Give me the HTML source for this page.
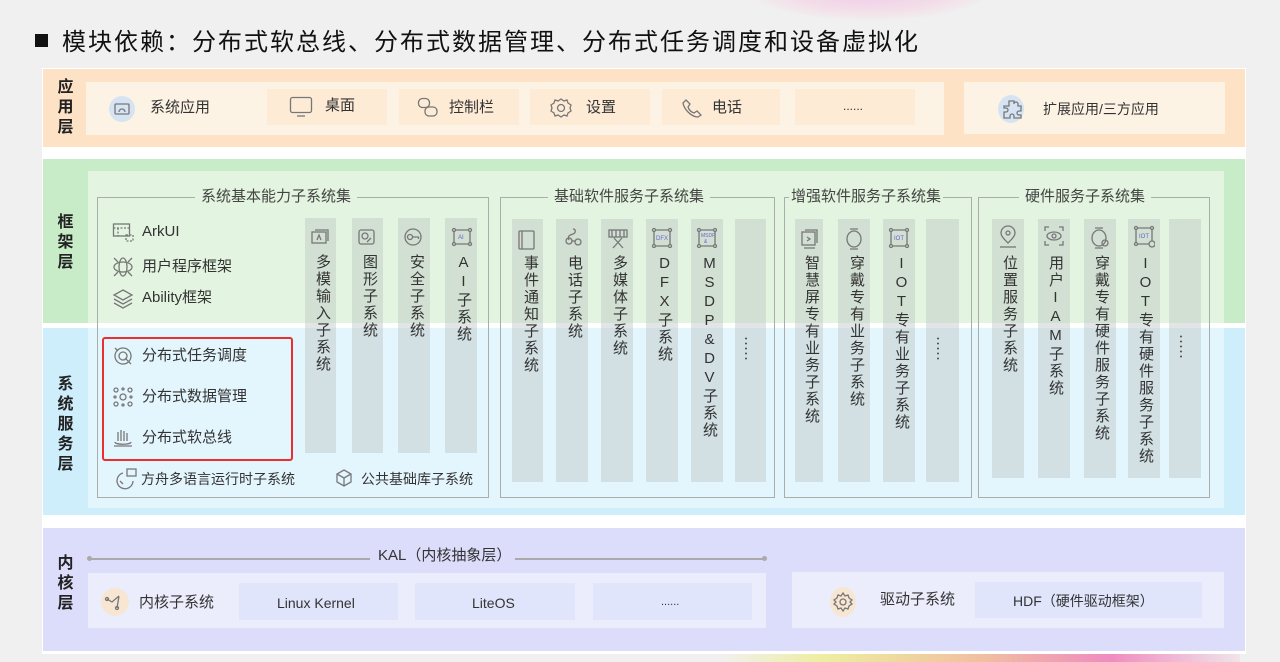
<!DOCTYPE html>
<html><head><meta charset="utf-8"><style>
*{margin:0;padding:0;box-sizing:border-box}
body{width:1280px;height:662px;background:#f0f0f0;position:relative;overflow:hidden;font-family:"Liberation Sans","Noto Sans CJK SC",sans-serif;color:#333}
.a{position:absolute}
.lab{position:absolute;width:43px;text-align:center;font-weight:bold;font-size:16px;line-height:20px;color:#222}
.t{position:absolute;font-size:15px;line-height:18px;white-space:nowrap;color:#333}
.col{position:absolute;background:rgba(185,192,192,0.42)}
.vt{position:absolute;writing-mode:vertical-rl;text-orientation:upright;font-size:15px;letter-spacing:2px;color:#333;white-space:nowrap}
.grp{position:absolute;border:1.5px solid #a9aeab}
.gt{position:absolute;font-size:15px;line-height:18px;color:#444;background:#e3f5e0;padding:0 6px;white-space:nowrap}
.dots{position:absolute;width:2px;height:24px;background:radial-gradient(circle,#555 0.9px,transparent 1.1px) 0 0/2px 5px repeat-y}
svg{position:absolute;fill:none;stroke:#777;stroke-width:1.3}
</style></head><body>
<div class="a" style="left:750px;top:-40px;width:240px;height:60px;border-radius:50%;background:radial-gradient(ellipse,#eec8ec 0%,#f3dfe8 50%,rgba(240,240,240,0) 75%)"></div>
<div class="a" style="left:35px;top:34px;width:13px;height:13px;background:#111"></div>
<div class="t" style="left:62px;top:27px;font-size:24px;line-height:32px;letter-spacing:2px;color:#111">模块依赖：分布式软总线、分布式数据管理、分布式任务调度和设备虚拟化</div>

<div class="a" style="left:42px;top:68px;width:1204px;height:586px;background:#fff"></div>
<div class="a" style="left:43px;top:69px;width:1202px;height:78px;background:#fde2c6"></div>
<div class="lab" style="left:44px;top:78px">应<br>用<br>层</div>
<div class="a" style="left:86px;top:82px;width:858px;height:53px;background:#fdf3e4"></div>
<div class="a" style="left:109px;top:96px;width:26px;height:26px;border-radius:50%;background:#d5e3f3"></div>
<svg style="left:113px;top:100px" width="18" height="18"><rect x="2" y="4" width="14" height="10" rx="1"/><path d="M6 12a3 3 0 0 1 6 0"/></svg>
<div class="t" style="left:150px;top:99px">系统应用</div>
<div class="a" style="left:267px;top:89px;width:120px;height:36px;background:#fdebd6"></div>
<svg style="left:289px;top:96px" width="24" height="22"><rect x="1.5" y="1.5" width="21" height="15" rx="2"/><path d="M8 20h8"/></svg>
<div class="t" style="left:325px;top:97px">桌面</div>
<div class="a" style="left:399px;top:89px;width:120px;height:36px;background:#fdebd6"></div>
<svg style="left:417px;top:97px" width="22" height="22"><rect x="1.5" y="1.5" width="11" height="9" rx="4"/><rect x="8" y="10" width="12" height="9" rx="4"/></svg>
<div class="t" style="left:449px;top:99px">控制栏</div>
<div class="a" style="left:530px;top:89px;width:120px;height:36px;background:#fdebd6"></div>
<svg style="left:550px;top:97px" width="22" height="22"><path d="M11 2l3 2 3-1 1 3 3 2-1 3 1 3-3 2-1 3-3-1-3 2-3-2-3 1-1-3-3-2 1-3-1-3 3-2 1-3 3 1z"/><circle cx="11" cy="11" r="3.5"/></svg>
<div class="t" style="left:586px;top:99px">设置</div>
<div class="a" style="left:662px;top:89px;width:118px;height:36px;background:#fdebd6"></div>
<svg style="left:682px;top:98px" width="20" height="20"><path d="M4 2l4 4-2 3c1 3 3 5 6 6l3-2 4 4-3 2C9 19 2 11 1 5z"/></svg>
<div class="t" style="left:712px;top:99px">电话</div>
<div class="a" style="left:795px;top:89px;width:120px;height:36px;background:#fdebd6"></div>
<div class="t" style="left:843px;top:97px;font-size:12px">......</div>
<div class="a" style="left:964px;top:82px;width:261px;height:52px;background:#fdf3e4"></div>
<div class="a" style="left:998px;top:95px;width:26px;height:28px;border-radius:50%;background:#d5e3f3"></div>
<svg style="left:1001px;top:98px" width="22" height="22"><path d="M8 3h5v3a2 2 0 0 1 4 0v2h3v5h-2a2 2 0 0 0 0 4h2v3H13v-2a2 2 0 0 0-4 0v2H3v-6h2a2 2 0 0 0 0-4H3V8h5z"/></svg>
<div class="t" style="left:1043px;top:100px;font-size:14px">扩展应用/三方应用</div>

<div class="a" style="left:43px;top:159px;width:1202px;height:164px;background:#c8ebc8"></div>
<div class="lab" style="left:44px;top:213px">框<br>架<br>层</div>
<div class="a" style="left:88px;top:171px;width:1136px;height:152px;background:#e3f5e0"></div>
<div class="a" style="left:43px;top:328px;width:1202px;height:187px;background:#cdeefa"></div>
<div class="lab" style="left:44px;top:375px">系<br>统<br>服<br>务<br>层</div>
<div class="a" style="left:88px;top:328px;width:1136px;height:180px;background:#e4f6fd"></div>
<div class="a" style="left:43px;top:528px;width:1202px;height:123px;background:#dcdcfb"></div>
<div class="lab" style="left:44px;top:554px">内<br>核<br>层</div>

<div class="grp" style="left:97px;top:197px;width:392px;height:301px"></div>
<div class="gt" style="left:195px;top:188px">系统基本能力子系统集</div>
<div class="grp" style="left:500px;top:197px;width:275px;height:301px"></div>
<div class="gt" style="left:548px;top:188px">基础软件服务子系统集</div>
<div class="grp" style="left:784px;top:197px;width:188px;height:301px"></div>
<div class="gt" style="left:789px;top:188px;padding:0 2px">增强软件服务子系统集</div>
<div class="grp" style="left:978px;top:197px;width:232px;height:301px"></div>
<div class="gt" style="left:1019px;top:188px">硬件服务子系统集</div>

<div class="col" style="left:305px;top:218px;width:31px;height:235px"></div>
<div class="col" style="left:352px;top:218px;width:31px;height:235px"></div>
<div class="col" style="left:398px;top:218px;width:32px;height:235px"></div>
<div class="col" style="left:445px;top:218px;width:32px;height:235px"></div>
<svg style="left:310px;top:228px" width="20" height="18"><rect x="2" y="4" width="14" height="11"/><path d="M5 2h13v11"/><path d="M7 12l2-5 2 5"/></svg>
<svg style="left:357px;top:228px" width="20" height="18"><rect x="2" y="2" width="15" height="14" rx="2"/><circle cx="8" cy="8" r="3"/><path d="M10 14l4-4"/></svg>
<svg style="left:402px;top:227px" width="22" height="20"><circle cx="11" cy="10" r="8"/><circle cx="8" cy="10" r="2.5"/><path d="M10.5 10h6v2"/></svg>
<svg style="left:451px;top:227px" width="22" height="20"><circle cx="3" cy="3" r="1.5"/><circle cx="19" cy="3" r="1.5"/><circle cx="3" cy="17" r="1.5"/><circle cx="19" cy="17" r="1.5"/><path d="M5 3h12M3 5v10M19 5v10M5 17h12"/><text x="7" y="12" font-size="6" fill="#66c" stroke="none">AI</text></svg>
<div class="vt" style="left:312px;top:254px">多模输入子系统</div>
<div class="vt" style="left:359px;top:254px">图形子系统</div>
<div class="vt" style="left:406px;top:254px">安全子系统</div>
<div class="vt" style="left:453px;top:254px">AI子系统</div>

<svg style="left:112px;top:222px" width="24" height="20"><rect x="1.5" y="2" width="16" height="12"/><path d="M1.5 6h16M6 6v8M14 13h7v6h-7z" stroke-dasharray="2 1.5"/></svg>
<div class="t" style="left:142px;top:223px">ArkUI</div>
<svg style="left:112px;top:256px" width="22" height="22"><ellipse cx="11" cy="11" rx="9" ry="5"/><ellipse cx="11" cy="11" rx="4" ry="9"/><path d="M2 2l4 4M20 2l-4 4M2 20l4-4M20 20l-4-4"/></svg>
<div class="t" style="left:142px;top:258px">用户程序框架</div>
<svg style="left:112px;top:288px" width="22" height="22"><path d="M11 2l9 5-9 5-9-5z"/><path d="M2 11l9 5 9-5M2 15l9 5 9-5"/></svg>
<div class="t" style="left:142px;top:289px">Ability框架</div>

<div class="a" style="left:102px;top:337px;width:191px;height:124px;border:2.5px solid #e8312f;border-radius:3px"></div>
<svg style="left:112px;top:345px" width="22" height="22"><circle cx="11" cy="11" r="8"/><circle cx="11" cy="11" r="4"/><path d="M13 13l6 6M3 3l3 3"/></svg>
<div class="t" style="left:142px;top:347px">分布式任务调度</div>
<svg style="left:112px;top:386px" width="22" height="22"><circle cx="4" cy="4" r="2"/><circle cx="18" cy="4" r="2"/><circle cx="4" cy="18" r="2"/><circle cx="18" cy="18" r="2"/><circle cx="11" cy="11" r="3"/><circle cx="11" cy="3" r="1"/><circle cx="11" cy="19" r="1"/><circle cx="3" cy="11" r="1"/><circle cx="19" cy="11" r="1"/></svg>
<div class="t" style="left:142px;top:388px">分布式数据管理</div>
<svg style="left:112px;top:427px" width="22" height="22"><path d="M2 19h18M3 15c0 3 16 3 16 0M6 14V5M9 14V3M12 14V4M15 14V6"/></svg>
<div class="t" style="left:142px;top:429px">分布式软总线</div>

<svg style="left:114px;top:467px" width="24" height="24"><path d="M9 6a8 8 0 1 0 10 8"/><rect x="13" y="2" width="9" height="7"/><path d="M6 14l3 3"/></svg>
<div class="t" style="left:141px;top:470px;font-size:14px">方舟多语言运行时子系统</div>
<svg style="left:332px;top:467px" width="24" height="22"><path d="M12 3l7 4v8l-7 4-7-4V7z"/><path d="M5 7l7 4 7-4M12 11v8"/></svg>
<div class="t" style="left:361px;top:470px;font-size:14px">公共基础库子系统</div>

<div class="col" style="left:512px;top:219px;width:31px;height:263px"></div>
<div class="col" style="left:556px;top:219px;width:32px;height:263px"></div>
<div class="col" style="left:601px;top:219px;width:32px;height:263px"></div>
<div class="col" style="left:646px;top:219px;width:32px;height:263px"></div>
<div class="col" style="left:691px;top:219px;width:32px;height:263px"></div>
<div class="col" style="left:735px;top:219px;width:31px;height:263px"></div>
<svg style="left:517px;top:229px" width="20" height="22"><rect x="2" y="2" width="15" height="18" rx="1"/><path d="M5 2v18"/></svg>
<svg style="left:563px;top:227px" width="22" height="22"><path d="M10 2c3 0 3 4 0 5s-6 2-4 6"/><circle cx="6" cy="14" r="3"/><circle cx="15" cy="15" r="3"/><path d="M9 14h3"/></svg>
<svg style="left:607px;top:228px" width="22" height="22"><rect x="2" y="2" width="18" height="7"/><path d="M5 2v7M9 2v7M13 2v7M17 2v7M6 20l9-10M16 20L7 10"/></svg>
<svg style="left:651px;top:227px" width="22" height="22"><circle cx="3" cy="3" r="1.5"/><circle cx="19" cy="3" r="1.5"/><circle cx="3" cy="19" r="1.5"/><circle cx="19" cy="19" r="1.5"/><path d="M5 3h12M3 5v12M19 5v12M5 19h12"/><text x="5" y="13" font-size="6" fill="#66c" stroke="none">DFX</text></svg>
<svg style="left:696px;top:227px" width="22" height="22"><circle cx="3" cy="3" r="1.5"/><circle cx="19" cy="3" r="1.5"/><circle cx="3" cy="19" r="1.5"/><circle cx="19" cy="19" r="1.5"/><path d="M5 3h12M3 5v12M19 5v12M5 19h12"/><text x="5" y="10" font-size="5" fill="#66c" stroke="none">MSDP</text><text x="8" y="16" font-size="5" fill="#66c" stroke="none">&amp;</text></svg>
<div class="vt" style="left:520px;top:255px">事件通知子系统</div>
<div class="vt" style="left:564px;top:255px">电话子系统</div>
<div class="vt" style="left:609px;top:255px">多媒体子系统</div>
<div class="vt" style="left:654px;top:255px">DFX子系统</div>
<div class="vt" style="left:699px;top:255px">MSDP&amp;DV子系统</div>
<div class="dots" style="left:745px;top:336px"></div>

<div class="col" style="left:795px;top:219px;width:28px;height:263px"></div>
<div class="col" style="left:838px;top:219px;width:32px;height:263px"></div>
<div class="col" style="left:883px;top:219px;width:32px;height:263px"></div>
<div class="col" style="left:926px;top:219px;width:33px;height:263px"></div>
<svg style="left:800px;top:228px" width="20" height="22"><rect x="2" y="4" width="13" height="13"/><path d="M5 2h12v13M4 20h11M7 9l3 2-3 2"/></svg>
<svg style="left:844px;top:227px" width="20" height="24"><path d="M6 2h8M6 22h8"/><ellipse cx="10" cy="12" rx="7" ry="8"/></svg>
<svg style="left:888px;top:227px" width="22" height="22"><circle cx="3" cy="3" r="1.5"/><circle cx="19" cy="3" r="1.5"/><circle cx="3" cy="19" r="1.5"/><circle cx="19" cy="19" r="1.5"/><path d="M5 3h12M3 5v12M19 5v12M5 19h12"/><text x="6" y="13" font-size="6" fill="#66c" stroke="none">IOT</text></svg>
<div class="vt" style="left:801px;top:255px">智慧屏专有业务子系统</div>
<div class="vt" style="left:846px;top:255px">穿戴专有业务子系统</div>
<div class="vt" style="left:891px;top:255px">IOT专有业务子系统</div>
<div class="dots" style="left:937px;top:336px"></div>

<div class="col" style="left:992px;top:219px;width:32px;height:259px"></div>
<div class="col" style="left:1038px;top:219px;width:32px;height:259px"></div>
<div class="col" style="left:1084px;top:219px;width:32px;height:259px"></div>
<div class="col" style="left:1128px;top:219px;width:32px;height:259px"></div>
<div class="col" style="left:1169px;top:219px;width:32px;height:259px"></div>
<svg style="left:997px;top:225px" width="22" height="24"><path d="M11 18c-4-4-7-7-7-10a7 7 0 0 1 14 0c0 3-3 6-7 10z"/><circle cx="11" cy="8" r="2"/><path d="M3 22h16"/></svg>
<svg style="left:1043px;top:225px" width="22" height="22"><path d="M2 6V2h4M16 2h4v4M2 16v4h4M20 16v4h-4"/><ellipse cx="11" cy="11" rx="7" ry="4"/><circle cx="11" cy="11" r="2"/></svg>
<svg style="left:1089px;top:226px" width="22" height="24"><path d="M6 2h8M6 22h8"/><ellipse cx="10" cy="12" rx="7" ry="8"/><circle cx="16" cy="17" r="3"/></svg>
<svg style="left:1133px;top:225px" width="22" height="24"><circle cx="3" cy="3" r="1.5"/><circle cx="19" cy="3" r="1.5"/><circle cx="3" cy="19" r="1.5"/><circle cx="19" cy="19" r="3"/><path d="M5 3h12M3 5v12M19 5v11M5 19h11"/><text x="6" y="13" font-size="6" fill="#66c" stroke="none">IOT</text></svg>
<div class="vt" style="left:999px;top:255px">位置服务子系统</div>
<div class="vt" style="left:1045px;top:255px">用户IAM子系统</div>
<div class="vt" style="left:1091px;top:255px">穿戴专有硬件服务子系统</div>
<div class="vt" style="left:1135px;top:255px">IOT专有硬件服务子系统</div>
<div class="dots" style="left:1180px;top:334px"></div>

<div class="a" style="left:88px;top:558px;width:282px;height:1.5px;background:#aaa"></div>
<div class="a" style="left:87px;top:556px;width:5px;height:5px;border-radius:50%;background:#aaa"></div>
<div class="t" style="left:378px;top:547px">KAL（内核抽象层）</div>
<div class="a" style="left:515px;top:558px;width:250px;height:1.5px;background:#aaa"></div>
<div class="a" style="left:762px;top:556px;width:5px;height:5px;border-radius:50%;background:#aaa"></div>
<div class="a" style="left:88px;top:573px;width:678px;height:55px;background:#ecedfc"></div>
<div class="a" style="left:101px;top:588px;width:28px;height:28px;border-radius:50%;background:#f6e6d2"></div>
<svg style="left:104px;top:591px" width="22" height="22"><path d="M3 8l5 3 7-6M15 5l-2 12"/><circle cx="3" cy="8" r="1.5"/><circle cx="13" cy="17" r="1.5"/></svg>
<div class="t" style="left:139px;top:594px">内核子系统</div>
<div class="a" style="left:239px;top:583px;width:159px;height:37px;background:#e0e5fb"></div>
<div class="t" style="left:277px;top:594px;font-size:14px">Linux Kernel</div>
<div class="a" style="left:415px;top:583px;width:160px;height:37px;background:#e0e5fb"></div>
<div class="t" style="left:472px;top:594px;font-size:14px">LiteOS</div>
<div class="a" style="left:593px;top:583px;width:159px;height:37px;background:#e0e5fb"></div>
<div class="t" style="left:661px;top:593px;font-size:11px">......</div>
<div class="a" style="left:792px;top:572px;width:432px;height:56px;background:#ecedfc"></div>
<div class="a" style="left:830px;top:587px;width:26px;height:30px;border-radius:50%;background:#f6e6d2"></div>
<svg style="left:833px;top:591px" width="20" height="22"><path d="M10 2l2 3 3-1 1 3 3 2-2 2 2 2-3 2-1 3-3-1-2 3-2-3-3 1-1-3-3-2 2-2-2-2 3-2 1-3 3 1z"/><circle cx="10" cy="11" r="3"/></svg>
<div class="t" style="left:880px;top:591px">驱动子系统</div>
<div class="a" style="left:975px;top:582px;width:227px;height:36px;background:#e0e5fb"></div>
<div class="t" style="left:1013px;top:592px;font-size:14px">HDF（硬件驱动框架）</div>

<div class="a" style="left:720px;top:654px;width:520px;height:8px;background:linear-gradient(90deg,rgba(240,240,200,0),#eeeea0 20%,#f0c0a0 50%,#f08cc0 75%,rgba(240,200,220,0.3))"></div>
</body></html>
